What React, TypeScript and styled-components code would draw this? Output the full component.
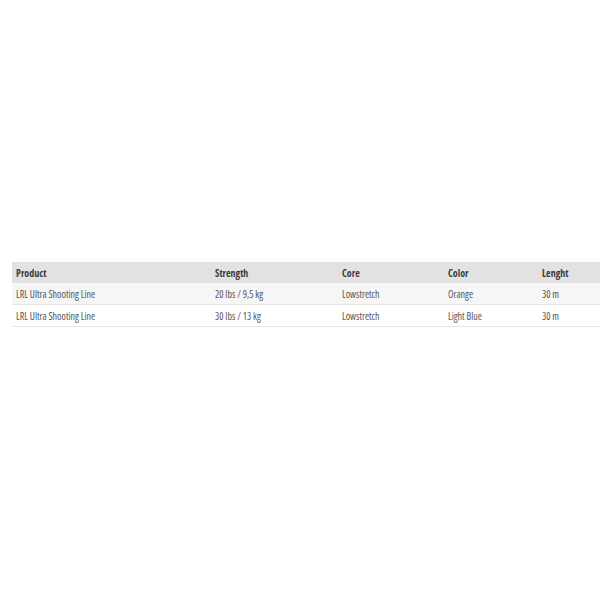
import React from "react";
import styled, { createGlobalStyle } from "styled-components";

const GlobalStyle = createGlobalStyle`
    html, body {
        margin: 0;
        padding: 0;
        background: #ffffff;
    }
    body {
        font-family: "Open Sans", "DejaVu Sans Condensed", sans-serif;
        font-stretch: 75%;
    }
`;

interface Row {
    product: string;
    strength: string;
    core: string;
    color: string;
    length: string;
}

const rows: Row[] = [
    { product: "LRL Ultra Shooting Line", strength: "20 lbs / 9,5 kg", core: "Lowstretch", color: "Orange", length: "30 m" },
    { product: "LRL Ultra Shooting Line", strength: "30 lbs / 13 kg", core: "Lowstretch", color: "Light Blue", length: "30 m" },
];

export default function App() {
    return (
        <>
            <GlobalStyle />
            <Page>
                <Table role="table">
                    <HeadRow role="row">
                        <HeadCell>Product</HeadCell>
                        <HeadCell>Strength</HeadCell>
                        <HeadCell>Core</HeadCell>
                        <HeadCell>Color</HeadCell>
                        <HeadCell>Lenght</HeadCell>
                    </HeadRow>
                    {rows.map((r, i) => (
                        <BodyRow role="row" key={i} $striped={i % 2 === 0}>
                            <Cell>{r.product}</Cell>
                            <Cell>{r.strength}</Cell>
                            <Cell>{r.core}</Cell>
                            <Cell>{r.color}</Cell>
                            <Cell>{r.length}</Cell>
                        </BodyRow>
                    ))}
                </Table>
            </Page>
        </>
    );
}

// 페이지
const Page = styled.div`
    padding: 262px 0 0 12px;
    width: 600px;
    height: 600px;
    box-sizing: border-box;
    overflow: hidden;
`;

// 테이블
const Table = styled.div`
    display: flex;
    flex-direction: column;
    width: 588px;
`;

const RowBase = styled.div`
    display: grid;
    grid-template-columns: 199px 127px 106px 94px 1fr;
    align-items: center;
`;

const HeadRow = styled(RowBase)`
    background-color: #e2e2e2;
    height: 21px;
`;

const BodyRow = styled(RowBase)<{ $striped: boolean }>`
    background-color: ${(p) => (p.$striped ? "#f6f6f6" : "#ffffff")};
    border-bottom: 1px solid #e4e4e4;
    height: 21px;
`;

const CellBase = styled.div`
    padding: 0 4px;
    font-size: 10px;
    white-space: nowrap;
`;

const HeadCell = styled(CellBase)`
    font-weight: 700;
    color: #3c3c3c;
`;

const Cell = styled(CellBase)`
    color: #555555;
`;
